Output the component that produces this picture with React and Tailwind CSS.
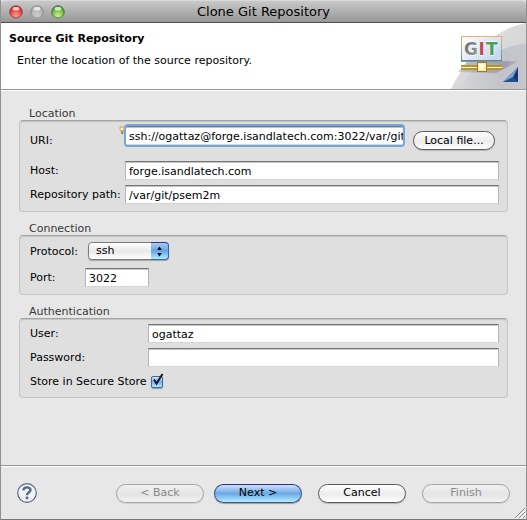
import { useState } from "react";

const fieldClass =
  "h-[19px] w-full min-w-0 border border-t-[#777] border-x-[#b4b4b4] border-b-[#d6d6d6] bg-white pt-px pl-[3px] text-[11px] leading-4 text-black shadow-[inset_0_1px_0_#c4c4c4] outline-none";

function TextField({ id, type = "text", value, className = "" }) {
  const [text, setText] = useState(value);
  return (
    <input
      id={id}
      type={type}
      value={text}
      onChange={(e) => setText(e.target.value)}
      className={`${fieldClass} ${className}`}
    />
  );
}

function Group({ title, className, children }) {
  return (
    <section className="mx-[18px]">
      <h2 className="h-4 pl-[10px] text-[11px] leading-5 text-[#383838]">{title}</h2>
      <div
        className={`rounded border border-[#c6c6c6] border-t-[#a4a4a4] bg-[#dfdfdf] pr-2 pl-[10px] shadow-[inset_0_1px_1px_#c2c2c2] ${className}`}
      >
        {children}
      </div>
    </section>
  );
}

const plainButton =
  "border-[#5c5c5c] bg-linear-to-b from-white via-[#ececec] via-55% to-white text-black shadow-[0_1px_1px_#b5b5b5]";
const disabledButton =
  "border-[#a5a5a5] bg-linear-to-b from-[#f0f0f0] via-[#e5e5e5] via-55% to-[#f2f2f2] text-[#898989] shadow-[0_1px_1px_#d0d0d0]";
const primaryButton =
  "border-[#35558f] border-t-[#28309a] bg-linear-to-b from-[#cfe0f3] via-[#6ba8e6] via-50% to-[#b4edff] text-black shadow-[0_1px_1px_#9c9c9c]";

function PushButton({ look, className, ...props }) {
  return (
    <button
      type="button"
      className={`h-[19px] shrink-0 rounded-full border text-[11px] leading-4 ${look} ${className}`}
      {...props}
    />
  );
}

function TrafficLight({ label, inner, outer, ring }) {
  const id = `light-${label}`;
  return (
    <button type="button" aria-label={label} className="size-[14px]">
      <svg viewBox="0 0 14 14" className="block size-[14px]">
        <defs>
          <radialGradient id={id} cx="50%" cy="80%" r="75%">
            <stop offset="0" stopColor={inner} />
            <stop offset="1" stopColor={outer} />
          </radialGradient>
        </defs>
        <circle cx="7" cy="7.5" r="6.3" fill="#d8d8d8" />
        <circle cx="7" cy="7" r="6.2" fill={`url(#${id})`} stroke={ring} strokeWidth="1" />
        <ellipse cx="7" cy="3.7" rx="3.3" ry="1.9" fill="#fff" opacity=".7" />
      </svg>
    </button>
  );
}

function GitBanner() {
  return (
    <svg viewBox="0 0 80 66" className="block h-[66px] w-20 shrink-0" role="img" aria-label="GIT">
      <defs>
        <linearGradient id="sweep" x1="0" y1="0" x2="1" y2="1">
          <stop offset="0" stopColor="#f3f3f3" />
          <stop offset=".45" stopColor="#dadadb" />
          <stop offset="1" stopColor="#cfcfd2" />
        </linearGradient>
        <linearGradient id="sweep2" x1="0" y1="0" x2="1" y2="0">
          <stop offset="0" stopColor="#d6d6d7" />
          <stop offset=".6" stopColor="#c3c4c9" />
          <stop offset="1" stopColor="#c6c7cc" />
        </linearGradient>
        <linearGradient id="board" x1="0" y1="0" x2="1" y2="0.6">
          <stop offset="0" stopColor="#fff" />
          <stop offset="1" stopColor="#c9d9ed" />
        </linearGradient>
        <linearGradient id="frame" x1="0" y1="0" x2="0" y2="1">
          <stop offset="0" stopColor="#e8b173" />
          <stop offset=".55" stopColor="#9caaa0" />
          <stop offset="1" stopColor="#5d8795" />
        </linearGradient>
        <linearGradient id="letterG" x1="0" y1="0" x2="1" y2="1">
          <stop offset="0" stopColor="#686868" />
          <stop offset="1" stopColor="#a2a2a2" />
        </linearGradient>
        <linearGradient id="shade" x1="0" y1="0" x2="1" y2="0">
          <stop offset="0" stopColor="#8f889e" stopOpacity=".35" />
          <stop offset=".8" stopColor="#8f889e" stopOpacity=".65" />
          <stop offset="1" stopColor="#8f889e" stopOpacity=".1" />
        </linearGradient>
      </defs>
      <path d="M5 66C20 36 43 8 80 0V66Z" fill="url(#sweep)" />
      <path d="M14 66C25 43 48 24 80 21V66Z" fill="url(#sweep2)" />
      <path d="M12 49L21 38H73L50 50Z" fill="url(#shade)" />
      <rect x="15.5" y="13.5" width="40" height="24" fill="url(#board)" stroke="url(#frame)" />
      <path d="M15 38.5H56" stroke="#8b9696" />
      <g
        fontFamily="'DejaVu Sans', sans-serif"
        fontWeight="700"
        fontSize="17"
        stroke="#fff"
        strokeWidth="1"
        paintOrder="stroke"
      >
        <text x="18" y="32" fill="url(#letterG)">G</text>
        <text x="32.5" y="32" fill="#bd4c50">I</text>
        <text x="40" y="32" fill="#4c9d56">T</text>
      </g>
      <path d="M34.5 38V42M37.5 38V42" stroke="#9b812f" />
      <rect x="15" y="42" width="41" height="5" fill="#b39634" />
      <path d="M15 44.5H56" stroke="#fff8ba" />
      <rect x="31.5" y="39.5" width="9" height="9" fill="#fff0a5" stroke="#a2742e" />
      <rect x="33" y="41" width="5" height="5" fill="#fffbe0" />
      <path d="M57 59L72 44V59Z" fill="#3564a6" />
      <path d="M72 44V59L67 54Z" fill="#173774" />
      <path d="M57 59L67 54L72 59Z" fill="#244c8e" />
      <path d="M57 59L72 44L67 54Z" fill="#77a2d4" />
    </svg>
  );
}

export default function App() {
  const [stored, setStored] = useState(true);
  return (
    <main className="flex min-h-screen flex-col border-x border-b border-x-[#919191] border-b-[#777] bg-[#e7e7e7] font-['DejaVu_Sans','Lucida_Grande',sans-serif] text-[11px] leading-4 text-black">
      <div className="grid h-[23px] grid-cols-[1fr_auto_1fr] items-center rounded-t border-t border-b border-t-[#d8d8d8] border-b-[#515151] bg-linear-to-b from-[#c9c9c9] to-[#979797] px-2">
        <div className="flex gap-[7px]">
          <TrafficLight label="Close" inner="#ff9b90" outer="#d81e1e" ring="#8c3939" />
          <TrafficLight label="Minimize" inner="#cecece" outer="#a8a8a8" ring="#858585" />
          <TrafficLight label="Zoom" inner="#c8f28a" outer="#479b2a" ring="#416b35" />
        </div>
        <h1 className="pt-px text-[13px] leading-4">Clone Git Repository</h1>
      </div>

      <header className="flex h-[67px] justify-between border-b border-[#969696] bg-white">
        <div className="pt-2 pl-2">
          <p className="font-bold">Source Git Repository</p>
          <p className="pt-[6px] pl-2">Enter the location of the source repository.</p>
        </div>
        <GitBanner />
      </header>

      <form className="flex flex-1 flex-col gap-[7px] border-t border-white pt-[13px] pb-6">
        <Group
          title="Location"
          className="grid grid-cols-[95px_1fr] items-center gap-y-[5px] pt-[5px] pb-[7px]"
        >
          <label htmlFor="uri">URI:</label>
          <div className="mb-[5px] flex h-[25px] items-start gap-[10px] pr-1 pl-px">
            <div className="relative min-w-0 flex-1">
              <TextField
                id="uri"
                value="ssh://ogattaz@forge.isandlatech.com:3022/var/git"
                className="rounded-xs border-x-0 ring-2 ring-[#75a7df]"
              />
              <svg viewBox="0 0 6 8" className="absolute top-0 -left-[7px] h-2 w-[6px]">
                <path d="M1 1H5V3.5L4 5H2L1 3.5Z" fill="#fff3c4" stroke="#dc962f" />
                <path d="M2 6H4.5M2.5 7.5H4" stroke="#434b60" />
              </svg>
            </div>
            <PushButton look={plainButton} className="mt-[5px] w-[82px]">Local file...</PushButton>
          </div>
          <label htmlFor="host">Host:</label>
          <TextField id="host" value="forge.isandlatech.com" />
          <label htmlFor="path">Repository path:</label>
          <TextField id="path" value="/var/git/psem2m" />
        </Group>

        <Group
          title="Connection"
          className="grid grid-cols-[55px_1fr] items-center gap-y-[6px] pt-[6px] pb-[7px]"
        >
          <label htmlFor="protocol">Protocol:</label>
          <div className="relative ml-[3px] h-5 w-[81px]">
            <select
              id="protocol"
              defaultValue="ssh"
              className="block h-[18px] w-full appearance-none rounded border border-[#7c7c7c] bg-linear-to-b from-white via-[#e8e8e8] to-white pl-[7px] text-[11px] leading-4 shadow-[0_1px_1px_#a2a2a2] outline-none"
            >
              <option>ssh</option>
            </select>
            <span className="pointer-events-none absolute top-0 right-0 flex h-[18px] w-[18px] items-center justify-center rounded-r border border-l-0 border-[#3d649d] border-t-[#263b8e] bg-linear-to-b from-[#a9cbef] via-[#65a5e4] to-[#acedff]">
              <svg viewBox="0 0 7 11" className="h-[11px] w-[7px]">
                <path d="M1.200 4L3.5 0.500L5.800 4ZM1.200 7L3.5 10.500L5.800 7Z" />
              </svg>
            </span>
          </div>
          <label htmlFor="port">Port:</label>
          <div className="flex w-16">
            <TextField id="port" value="3022" />
          </div>
        </Group>

        <Group
          title="Authentication"
          className="grid grid-cols-[118px_1fr] items-center gap-y-[5px] pt-[5px] pb-[6px]"
        >
          <label htmlFor="user">User:</label>
          <TextField id="user" value="ogattaz" />
          <label htmlFor="password">Password:</label>
          <TextField id="password" type="password" value="" />
          <label htmlFor="secure" className="whitespace-nowrap">Store in Secure Store</label>
          <span className="relative ml-[3px] flex h-[19px] items-center">
            <input
              id="secure"
              type="checkbox"
              checked={stored}
              onChange={(e) => setStored(e.target.checked)}
              className="size-3 appearance-none rounded-xs border border-[#45699a] bg-linear-to-b from-[#cfe3f8] via-[#75b0ea] to-[#b1e9ff] shadow-[0_1px_1px_#999]"
            />
            {stored && (
              <svg
                viewBox="0 0 14 14"
                className="pointer-events-none absolute top-px left-0 size-[14px]"
              >
                <path d="M3 6.5L5.5 10.5L11.5 1" fill="none" stroke="#111827" strokeWidth="2" />
              </svg>
            )}
          </span>
        </Group>
      </form>

      <footer className="relative border-t border-[#969696]">
        <div className="flex h-[53px] items-center justify-between border-t border-white px-4">
          <button type="button" aria-label="Help" className="size-5">
            <svg viewBox="0 0 20 20" className="block size-5">
              <circle cx="10" cy="10" r="9.3" fill="#f1f2f4" stroke="#566887" strokeWidth="1.2" />
              <path
                d="M6.3 7.4C6.5 3.6 13.5 3.4 13.5 7C13.5 9.3 10 9.3 10 12.3"
                fill="none"
                stroke="#566887"
                strokeWidth="2.4"
              />
              <rect x="8.7" y="13.6" width="2.6" height="2.6" fill="#566887" />
            </svg>
          </button>
          <div className="flex gap-4">
            <div className="flex gap-[10px]">
              <PushButton look={disabledButton} className="w-[88px]" disabled>{"< Back"}</PushButton>
              <PushButton look={primaryButton} className="w-[88px]">{"Next >"}</PushButton>
            </div>
            <PushButton look={plainButton} className="w-[88px]">Cancel</PushButton>
            <PushButton look={disabledButton} className="w-[88px]" disabled>Finish</PushButton>
          </div>
        </div>
        <svg viewBox="0 0 12 12" className="pointer-events-none absolute right-0 bottom-0 size-3">
          <path d="M1 11L11 1M5 11L11 5M9 11L11 9" stroke="#888" fill="none" />
          <path d="M2 12L12 2M6 12L12 6" stroke="#fff" fill="none" />
        </svg>
      </footer>
    </main>
  );
}
